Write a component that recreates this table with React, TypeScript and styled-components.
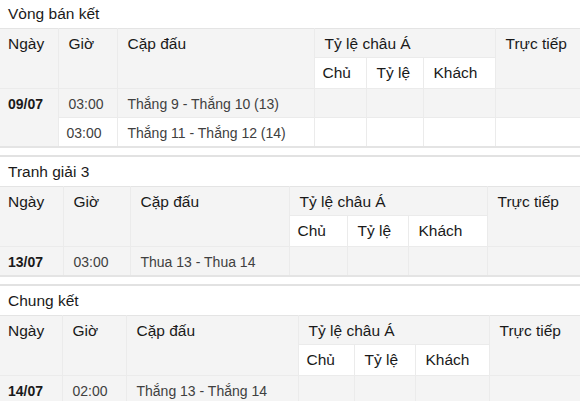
import React from "react";
import styled, { createGlobalStyle } from "styled-components";

const GlobalStyle = createGlobalStyle`
  html, body { margin: 0; padding: 0; background: #fff; }
  body { font-family: "Liberation Sans", Arial, sans-serif; }
`;

type Match = { date?: string; dateSpan?: number; time: string; pair: string };
type Stage = { title: string; cols: number[]; matches: Match[] };

const stages: Stage[] = [
  {
    title: "Vòng bán kết",
    cols: [58, 59, 197, 52, 57, 72, 85],
    matches: [
      { date: "09/07", dateSpan: 2, time: "03:00", pair: "Thắng 9 - Thắng 10 (13)" },
      { time: "03:00", pair: "Thắng 11 - Thắng 12 (14)" },
    ],
  },
  {
    title: "Tranh giải 3",
    cols: [63, 67, 159, 58, 61, 79, 93],
    matches: [{ date: "13/07", dateSpan: 1, time: "03:00", pair: "Thua 13 - Thua 14" }],
  },
  {
    title: "Chung kết",
    cols: [62, 64, 172, 56, 61, 74, 91],
    matches: [{ date: "14/07", dateSpan: 1, time: "02:00", pair: "Thắng 13 - Thắng 14" }],
  },
];

const Page = styled.div`
  display: flex;
  flex-direction: column;
  width: 580px;
`;

const Section = styled.section<{ $first?: boolean }>`
  display: flex;
  flex-direction: column;
  border-top: ${(p) => (p.$first ? "none" : "2px solid #e2e2e2")};
  padding-bottom: 7px;
`;

const Title = styled.div<{ $first?: boolean }>`
  height: ${(p) => (p.$first ? "28px" : "29px")};
  display: flex;
  align-items: center;
  padding-left: 8px;
  font-size: 15.5px;
  color: #1a1a1a;
`;

const Table = styled.table`
  width: 580px;
  table-layout: fixed;
  border-collapse: collapse;
  border-top: 1px solid #e4e4e4;
  border-bottom: 2px solid #e4e4e4;
`;

const Row = styled.tr<{ $shade: boolean }>`
  background: ${(p) => (p.$shade ? "#f4f4f4" : "#ffffff")};
`;

const HeadCell = styled.th<{ $tall?: boolean }>`
  padding: 7px 10px ${(p) => (p.$tall ? "7px" : "5px")} 10px;
  text-align: left;
  vertical-align: top;
  font-weight: normal;
  font-size: 15.5px;
  line-height: 16px;
  color: #1a1a1a;
  border: 1px solid #ebebeb;
  border-top: none;
  white-space: nowrap;
  &:first-child { padding-left: 8px; border-left: none; }
  &:last-child { border-right: none; }
`;

const Cell = styled.td<{ $bold?: boolean }>`
  padding: 7px 10px 5px 10px;
  text-align: left;
  vertical-align: top;
  font-size: 14px;
  line-height: 16px;
  font-weight: ${(p) => (p.$bold ? "bold" : "normal")};
  color: ${(p) => (p.$bold ? "#1a1a1a" : "#404040")};
  border: 1px solid #ebebeb;
  white-space: nowrap;
  &:first-child { padding-left: 8px; border-left: none; }
  &:last-child { border-right: none; }
`;

function StageTable({ stage }: { stage: Stage }) {
  let rowIndex = 2;
  return (
    <Table>
      <colgroup>
        {stage.cols.map((w, i) => (
          <col key={i} style={{ width: w }} />
        ))}
      </colgroup>
      <tbody>
        <Row $shade>
          <HeadCell rowSpan={2}>Ngày</HeadCell>
          <HeadCell rowSpan={2}>Giờ</HeadCell>
          <HeadCell rowSpan={2}>Cặp đấu</HeadCell>
          <HeadCell colSpan={3}>Tỷ lệ châu Á</HeadCell>
          <HeadCell rowSpan={2}>Trực tiếp</HeadCell>
        </Row>
        <Row $shade={false}>
          <HeadCell $tall>Chủ</HeadCell>
          <HeadCell $tall>Tỷ lệ</HeadCell>
          <HeadCell $tall>Khách</HeadCell>
        </Row>
        {stage.matches.map((m, i) => {
          const shade = rowIndex % 2 === 0;
          rowIndex += 1;
          return (
            <Row key={i} $shade={shade}>
              {m.date && (
                <Cell $bold rowSpan={m.dateSpan}>
                  {m.date}
                </Cell>
              )}
              <Cell>{m.time}</Cell>
              <Cell>{m.pair}</Cell>
              <Cell />
              <Cell />
              <Cell />
              <Cell />
            </Row>
          );
        })}
      </tbody>
    </Table>
  );
}

export default function App() {
  return (
    <>
      <GlobalStyle />
      <Page>
        {stages.map((s, i) => (
          <Section key={s.title} $first={i === 0}>
            <Title $first={i === 0}>{s.title}</Title>
            <StageTable stage={s} />
          </Section>
        ))}
      </Page>
    </>
  );
}
